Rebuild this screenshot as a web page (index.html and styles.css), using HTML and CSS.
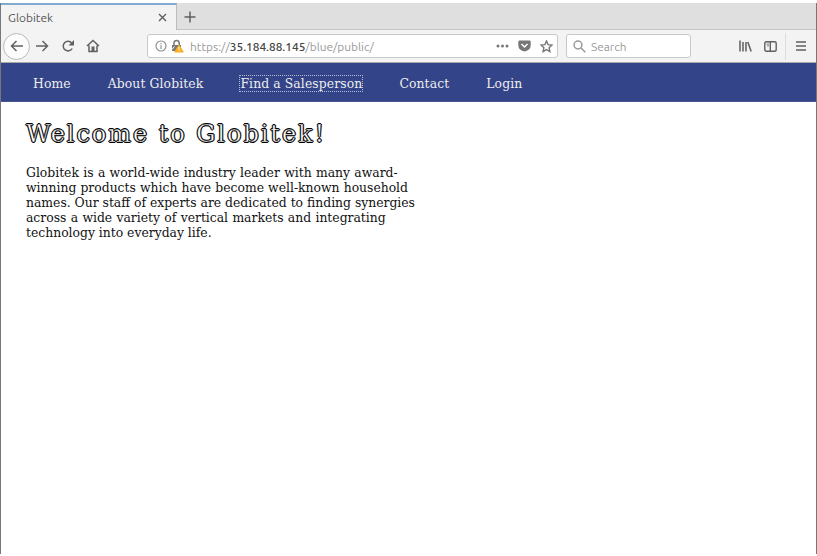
FILE: index.html
```html
<!DOCTYPE html>
<html lang="en">
<head>
<meta charset="utf-8">
<title>Globitek</title>
<link rel="stylesheet" href="styles.css">
</head>
<body>
<div class="window">
  <div class="tabs">
    <div class="tab"><span>Globitek</span>
      <svg class="close" width="9" height="9" viewBox="0 0 9 9"><path d="M1 1l7 7M8 1l-7 7"/></svg>
    </div>
    <svg class="plus" width="12" height="12" viewBox="0 0 12 12"><path d="M6 .5v11M.5 6h11"/></svg>
  </div>
  <div class="toolbar">
    <div class="back"><svg width="14" height="14" viewBox="0 0 14 14"><path d="M13 7H2M6.5 2L1.5 7l5 5"/></svg></div>
    <svg class="forward" width="14" height="14" viewBox="0 0 14 14"><path d="M1 7h11M7.5 2l5 5-5 5"/></svg>
    <svg class="reload" width="14" height="14" viewBox="0 0 14 14"><path d="M11.2 9.5A4.8 4.8 0 1 1 10.7 4L12 5.5"/><path class="solid" d="M13 1v5.5H7.5z"/></svg>
    <svg class="home" width="14" height="14" viewBox="0 0 14 14"><path d="M1 7l6-5.5L13 7M3 6.5v6h8v-6"/><path class="solid" d="M5.5 7.5h3V12h-3z"/></svg>
    <div class="address">
      <svg class="info" width="12" height="12" viewBox="0 0 12 12"><circle cx="6" cy="6" r="5"/><path d="M6 5.2V9M6 3v1.2"/></svg>
      <svg class="lock" width="13" height="14" viewBox="0 0 13 14"><path class="shackle" d="M3 7V4a2.6 2.6 0 0 1 5.2 0v3"/><path class="case" d="M1 6h9v6H1z"/><path class="slash" d="M1 10.5L3.5 7.5"/><path class="warn" d="M8 6l4.3 7H3.7z"/><path class="mark" d="M8 8v2.4M8 11.1v1"/></svg>
      <span class="url">https://<b>35.184.88.145</b>/blue/public/</span>
      <svg class="dots" width="13" height="4" viewBox="0 0 13 4"><circle cx="2" cy="2" r="1.5"/><circle cx="6.5" cy="2" r="1.5"/><circle cx="11" cy="2" r="1.5"/></svg>
      <svg class="pocket" width="13" height="12" viewBox="0 0 13 12"><path class="bag" d="M1.5.5h10q1.2 0 1.2 1.2v3.5a6.2 6.2 0 0 1-12.4 0V1.7Q.3.5 1.5.5z"/><path class="check" d="M3.5 4l3 3 3-3"/></svg>
      <svg class="star" width="13" height="13" viewBox="0 0 13 13"><path d="M6.5 1l1.6 3.6 3.9.4-2.9 2.7.8 3.9-3.4-2-3.4 2 .8-3.9L1 5l3.9-.4z"/></svg>
    </div>
    <div class="search">
      <svg width="13" height="13" viewBox="0 0 13 13"><circle cx="5" cy="5" r="3.9"/><path d="M8 8l4.3 4.3"/></svg>
      <span>Search</span>
    </div>
    <svg class="library" width="13" height="12" viewBox="0 0 13 12"><path d="M1 .5v11M4 2v9.5M7 2v9.5M8.8 2l3.4 9.5"/></svg>
    <svg class="sidebar" width="13" height="11" viewBox="0 0 13 11"><rect x=".8" y=".8" width="11.4" height="9.4" rx="1.5"/><path d="M6.3 1v9"/><path class="thin" d="M2.5 3H5M3 4.8h2"/></svg>
    <div class="menu"><svg width="10" height="10" viewBox="0 0 10 10"><path d="M0 1h10M0 5h10M0 9h10"/></svg></div>
  </div>
  <nav>
    <a>Home</a><a>About Globitek</a><a class="focused">Find a Salesperson</a><a>Contact</a><a>Login</a>
  </nav>
  <main>
    <h1>Welcome to Globitek!</h1>
    <p><span class="wide">Globitek is a world-wide industry leader with many award-</span><br><span class="medium">winning products which have become well-known household</span><br>names. Our staff of experts are dedicated to finding synergies<br><span class="wide">across a wide variety of vertical markets and integrating</span><br>technology into everyday life.</p>
  </main>
</div>
</body>
</html>
```
FILE: styles.css
```css
* { box-sizing: border-box; }
body { margin: 0; padding: 3px 0 2px; height: 556px; background: #fff; overflow: hidden; }
svg { display: block; flex: none; fill: none; stroke: #606060; stroke-width: 1.5; }
.window { height: 551px; border: solid #77777b; border-width: 0 1px; }
.tabs { display: flex; align-items: center; height: 27px; background: #dfdfdf; box-shadow: inset 0 -1px #c5c5c3; font: 11.9px Ubuntu, "Noto Sans", sans-serif; color: #555; }
.tab { display: flex; justify-content: space-between; align-items: center; width: 176px; height: 27px; padding: 0 9px 0 7px; background: #f3f3f3; border-top: 2px solid #7fabd0; border-right: 1px solid #bbb; }
.tab span { line-height: 20px; }
.close { stroke-width: 1.4; }
.plus { margin: 0 0 0 7px; }
.toolbar { display: flex; align-items: center; height: 33px; background: #f3f3f3; border-bottom: 1px solid #aaa; font: 11.85px Ubuntu, "Noto Sans", sans-serif; }
.back { display: flex; align-items: center; justify-content: center; width: 27px; height: 27px; margin-left: 2px; border: 1px solid #b9b9b9; border-radius: 50%; background: #fcfcfc; }
.forward { margin-left: 5px; }
.reload { margin-left: 12px; }
.home { margin-left: 11px; }
.solid { fill: #606060; stroke: none; }
.address, .search { display: flex; align-items: center; height: 24px; background: #fff; border: 1px solid #c9c9c9; border-radius: 3px; }
.address { width: 411px; margin-left: 47px; padding: 0 4px 0 7px; }
.info { stroke: #888; stroke-width: 1.1; }
.lock { margin-left: 4px; }
.shackle { stroke: #777; }
.case { fill: #777; stroke: none; }
.slash { stroke: #fff; stroke-width: 1; }
.warn { fill: #f9ad20; stroke: #f9ad20; stroke-width: 1; stroke-linejoin: round; }
.mark { stroke: #fff; stroke-width: 1; }
.url { margin-left: 6px; color: #999; white-space: nowrap; }
.url b { font-weight: 500; color: #444; }
.dots { margin-left: auto; fill: #777; stroke: none; }
.pocket { margin-left: 9px; }
.bag { fill: #777; stroke: none; }
.check { stroke: #fff; }
.star { margin-left: 9px; stroke: #777; stroke-width: 1.4; }
.search { width: 125px; margin-left: 8px; padding-left: 6px; color: #999; }
.search svg { stroke: #999; stroke-width: 1.5; }
.search span { margin-left: 5px; }
.library { margin-left: 48px; }
.sidebar { margin-left: 12px; stroke-width: 1.4; }
.thin { stroke-width: .8; }
.menu { display: flex; align-items: center; height: 27px; margin-left: 8px; padding-left: 10px; border-left: 1px solid #ddd; }
nav { display: flex; align-items: center; height: 39px; padding: 2px 0 0 32px; gap: 37px; background: #334488; border-bottom: 1px solid #465695; font: 13.75px/15px "DejaVu Serif Condensed", "DejaVu Serif", serif; letter-spacing: .11px; color: #eee; }
nav a { white-space: nowrap; }
.focused { outline: 1px dotted #b5bbd5; }
main { padding: 18px 0 0 25px; font-family: "DejaVu Serif Condensed", "DejaVu Serif", serif; }
h1 { margin: 0; font: 24px/28px "DejaVu Serif", serif; letter-spacing: 1.95px; color: #fff; -webkit-text-stroke: .4px #000; text-shadow: -1px 0 #000, 0 1px #000, 1px 0 #000, 0 -1px #000; white-space: nowrap; }
p { margin: 17px 0 0; font-size: 13.75px; line-height: 15px; color: #111; white-space: nowrap; }
.wide { word-spacing: .4px; }
.medium { word-spacing: .2px; }
```
